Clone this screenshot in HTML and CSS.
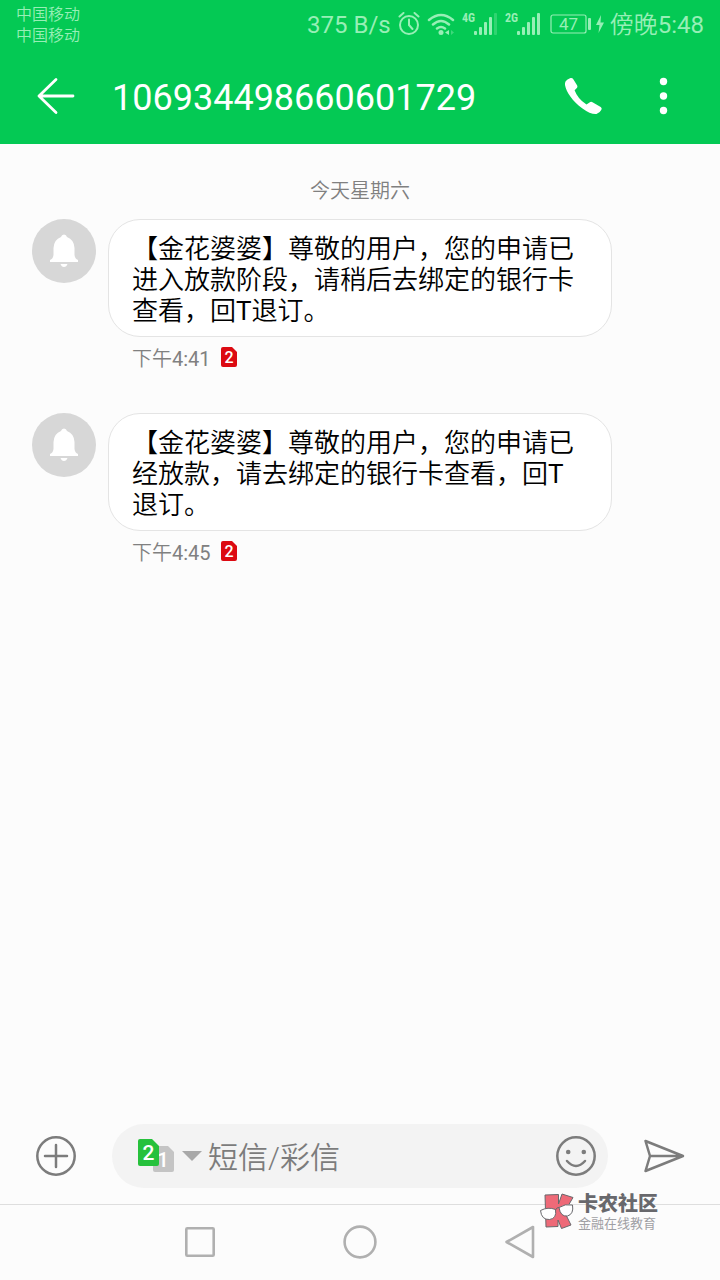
FILE: index.html
```html
<!DOCTYPE html>
<html lang="zh-CN">
<head>
<meta charset="utf-8">
<meta name="viewport" content="width=device-width, initial-scale=1">
<title>106934498660601729</title>
<link rel="stylesheet" href="styles.css">
</head>
<body>
<div class="screen">
  <header class="top">
    <div class="status">
      <div class="carriers"><span>中国移动</span><span>中国移动</span></div>
      <div class="indicators">
        <span class="speed">375 B/s</span>
        <svg width="22" height="26" viewBox="0 0 22 26" fill="none" stroke="currentColor" stroke-width="2" stroke-linecap="round"><circle cx="11" cy="13" r="9"/><path d="M11 7.500V13l3.500 4M1.500 4.500l4-3.500M20.500 4.500l-4-3.500"/></svg>
        <svg class="wifi" width="28" height="26" viewBox="0 0 28 26" fill="none" stroke="currentColor" stroke-width="2.500" stroke-linecap="round"><path d="M2 8Q14-2 26 8M6 12.500Q14 5.500 22 12.500M10 16.500Q14 13.500 18 16.500"/><circle cx="14" cy="20.500" r="2.500" fill="currentColor" stroke="none"/><path d="M22 18v5l-4-2.500z" fill="currentColor" stroke="none"/><path d="M24 18v5l3-2.500z" fill="currentColor" stroke="none" opacity=".4"/></svg>
        <svg class="signal" width="36" height="26" viewBox="0 0 36 26" fill="currentColor"><text x="0" y="10" class="net">4G</text><rect x="12" y="19" width="3" height="4" rx="1"/><rect x="17" y="15" width="3" height="8" rx="1"/><rect x="22" y="10" width="3" height="13" rx="1"/><rect x="27" y="5" width="3" height="18" rx="1"/><rect x="32" y="1" width="3" height="22" rx="1" opacity=".3"/></svg>
        <svg class="signal" width="36" height="26" viewBox="0 0 36 26" fill="currentColor"><text x="0" y="10" class="net">2G</text><rect x="12" y="19" width="3" height="4" rx="1"/><rect x="17" y="15" width="3" height="8" rx="1"/><rect x="22" y="10" width="3" height="13" rx="1"/><rect x="27" y="5" width="3" height="18" rx="1"/><rect x="32" y="1" width="3" height="22" rx="1"/></svg>
        <svg class="battery" width="42" height="26" viewBox="0 0 42 26" fill="currentColor"><rect x="1" y="3" width="35" height="18" rx="2" fill="none" stroke="currentColor" stroke-width="1.200"/><rect x="38" y="6" width="3" height="12" rx="1"/><text x="18.500" y="18" text-anchor="middle" class="level">47</text></svg>
        <svg class="bolt" width="10" height="26" viewBox="0 0 10 26" fill="currentColor"><path d="M6 3L1 13h3.500L3.500 21 9 10.500H5.500z"/></svg>
        <span class="clock">傍晚<span class="latin">5:48</span></span>
      </div>
    </div>
    <div class="titlebar">
      <button class="icon-btn" aria-label="返回"><svg width="40" height="40" viewBox="0 0 40 40" fill="none" stroke="currentColor" stroke-width="2.800" stroke-linecap="round" stroke-linejoin="round"><path d="M37 20H3M20 3.500L3 20l17 16.500"/></svg></button>
      <h1 class="title">106934498660601729</h1>
      <button class="icon-btn" aria-label="呼叫"><svg width="40" height="40" viewBox="0 0 40 40" fill="currentColor"><path d="M1.500 5.500Q3 3 6.500 2Q8.300 1.500 9.300 3.200L13.200 9.500Q14 11 12.600 12.200L10.600 14.200Q13.500 22.500 22.500 28.600L25.500 26.500Q27 25.400 28.500 26.200L36.700 31Q38.300 32.200 37.400 33.800Q35.900 37 32.500 38Q26.500 38.500 18.500 32.500C8.500 25.500 2 15.500 1 9Q.700 7 1.500 5.500Z"/></svg></button>
      <button class="icon-btn" aria-label="更多"><svg width="40" height="40" viewBox="0 0 40 40" fill="currentColor"><circle cx="19.500" cy="5.500" r="3.700"/><circle cx="19.500" cy="20" r="3.700"/><circle cx="19.500" cy="34.500" r="3.700"/></svg></button>
    </div>
  </header>

  <main class="thread">
    <p class="day">今天星期六</p>
    <article class="message">
      <svg class="avatar" width="64" height="64" viewBox="0 0 64 64"><circle cx="32" cy="32" r="32" fill="#d7d7d7"/><path fill="#fff" d="M32 15.500q2.300 0 3 2.500Q42 20.500 42.500 29v7q.500 4 3.500 5v2H18v-2q3-1 3.500-5v-7q.500-8.500 7.500-11 .700-2.500 3-2.500zM28.500 45h7q-1 3-3.500 3t-3.500-3z"/></svg>
      <div class="body">
        <p class="bubble">【金花婆婆】尊敬的用户，您的申请已进入放款阶段，请稍后去绑定的银行卡查看，回<span class="latin">T</span>退订。</p>
        <div class="meta"><time>下午<span class="latin">4:41</span></time><svg width="18" height="22" viewBox="0 0 18 22"><path fill="#dc0a12" d="M3 1h9l5 5v13q0 2-2 2H3q-2 0-2-2V3q0-2 2-2z"/><text x="9" y="17" text-anchor="middle" class="sim-no">2</text></svg></div>
      </div>
    </article>
    <article class="message">
      <svg class="avatar" width="64" height="64" viewBox="0 0 64 64"><circle cx="32" cy="32" r="32" fill="#d7d7d7"/><path fill="#fff" d="M32 15.500q2.300 0 3 2.500Q42 20.500 42.500 29v7q.500 4 3.500 5v2H18v-2q3-1 3.500-5v-7q.500-8.500 7.500-11 .700-2.500 3-2.500zM28.500 45h7q-1 3-3.500 3t-3.500-3z"/></svg>
      <div class="body">
        <p class="bubble">【金花婆婆】尊敬的用户，您的申请已经放款，请去绑定的银行卡查看，回<span class="latin">T</span>退订。</p>
        <div class="meta"><time>下午<span class="latin">4:45</span></time><svg width="18" height="22" viewBox="0 0 18 22"><path fill="#dc0a12" d="M3 1h9l5 5v13q0 2-2 2H3q-2 0-2-2V3q0-2 2-2z"/><text x="9" y="17" text-anchor="middle" class="sim-no">2</text></svg></div>
      </div>
    </article>
  </main>

  <form class="composer">
    <button type="button" class="tool" aria-label="添加"><svg width="44" height="44" viewBox="0 0 44 44" fill="none" stroke="currentColor" stroke-width="2.500" stroke-linecap="round"><circle cx="22" cy="22" r="18.700"/><path d="M22 11v22M11 22h22"/></svg></button>
    <div class="field">
      <button type="button" class="sim" aria-label="选择 SIM 卡"><svg width="64" height="36" viewBox="0 0 64 36"><path fill="#c4c4c4" d="M18 8h13l6 6v18q0 2-2 2H18q-2 0-2-2V10q0-2 2-2z"/><text x="26" y="29" text-anchor="middle" class="sim-pick">1</text><path fill="#26c13c" d="M3 1h12l7 7v18q0 2-2 2H3q-2 0-2-2V3q0-2 2-2z"/><text x="11.500" y="22" text-anchor="middle" class="sim-pick">2</text><path fill="#a8a8a8" d="M45 13h20l-10 10z"/></svg></button>
      <input class="input" type="text" aria-label="短信/彩信" placeholder="短信/彩信">
      <button type="button" class="tool" aria-label="表情"><svg width="44" height="44" viewBox="0 0 44 44" fill="none" stroke="currentColor" stroke-width="2.500" stroke-linecap="round"><circle cx="22" cy="22" r="18.700"/><g fill="currentColor" stroke="none"><circle cx="14.200" cy="18" r="2.300"/><circle cx="29.800" cy="18" r="2.300"/></g><path d="M13 27q9 10 18 0"/></svg></button>
    </div>
    <button type="submit" class="tool" aria-label="发送"><svg width="44" height="44" viewBox="0 0 44 44" fill="none" stroke="currentColor" stroke-width="2.500" stroke-linejoin="round"><path d="M3.500 7L41 22 3.500 37 8 22zM8 22h33"/></svg></button>
  </form>

  <nav class="navbar">
    <button class="nav-btn" aria-label="最近任务"><svg width="36" height="36" viewBox="0 0 36 36" fill="none" stroke="currentColor" stroke-width="2.600"><rect x="4.300" y="4.300" width="27.400" height="27.400" rx="1"/></svg></button>
    <button class="nav-btn" aria-label="主屏幕"><svg width="36" height="36" viewBox="0 0 36 36" fill="none" stroke="currentColor" stroke-width="2.600"><circle cx="18" cy="18" r="15.400"/></svg></button>
    <button class="nav-btn" aria-label="返回"><svg width="36" height="36" viewBox="0 0 36 36" fill="none" stroke="currentColor" stroke-width="2.600" stroke-linejoin="round"><path d="M31 3v30L4.500 18z"/></svg></button>
  </nav>

  <aside class="brand">
    <svg width="36" height="38" viewBox="0 0 36 38" stroke="#68686c" stroke-width="1" stroke-linejoin="round"><path fill="#ee6a78" d="M5 3l13.500-.500V12L22 2l11 3.500L24.500 20 31 33l-9.500 3.500L18 28v6.500L6 35z"/><path fill="#fff" d="M.500 18.500Q8 14.500 15.500 17.500q1.500 9-6 10Q1.500 28 .500 18.500zM19 15.500q6-4 13.500-2.500 1.500 9-5 11-7 1-8.500-8.500z"/><path fill="none" d="M15.500 18q1.500-3 3.500-2.500"/></svg>
    <div class="brand-text"><strong>卡农社区</strong><small>金融在线教育</small></div>
  </aside>
</div>
</body>
</html>
```
FILE: styles.css
```css
* { box-sizing: border-box; }
body {
  margin: 0;
  background: #fcfcfc;
  color: #000;
  font-family: Roboto, "Noto Sans CJK SC", sans-serif;
}
h1, p { margin: 0; }
button {
  padding: 0;
  border: 0;
  background: none;
  color: inherit;
}
svg { display: block; flex: none; }
.latin { font-weight: 400; }

.screen {
  position: relative;
  display: flex;
  flex-direction: column;
  min-height: 100vh;
}

.top { background: #04c954; color: #fff; }
.status {
  display: flex;
  justify-content: space-between;
  align-items: center;
  height: 48px;
  padding: 2px 16px 0;
  color: #97efb6;
}
.carriers {
  display: flex;
  flex-direction: column;
  font-size: 16px;
  font-weight: 350;
  line-height: 21px;
}
.indicators {
  display: flex;
  align-items: center;
  gap: 7px;
  font-size: 24px;
  line-height: 32px;
}
.clock { font-weight: 350; }
.battery { margin-left: 2px; }
.bolt { margin: 0 -2px 0 -4px; }
.net { font: 700 12px "Roboto Condensed", Roboto, sans-serif; }
.level { font: 400 17px Roboto, sans-serif; }

.titlebar {
  display: flex;
  align-items: center;
  height: 96px;
  padding: 0 36px;
  gap: 36px;
}
.title {
  flex: 1;
  padding-top: 4px;
  font-size: 36px;
  font-weight: 400;
  line-height: 48px;
}
.icon-btn:last-child { margin-left: 4px; }

.thread {
  flex: 1;
  padding: 32px 32px 0;
}
.day {
  margin-bottom: 13px;
  color: #808080;
  font-size: 20px;
  font-weight: 350;
  line-height: 30px;
  text-align: center;
}
.message {
  display: flex;
  gap: 12px;
  margin-bottom: 40px;
}
.body { flex: 0 1 504px; }
.bubble {
  padding: 14px 23px 9px;
  border: 1px solid #e4e4e4;
  border-radius: 32px;
  background: #fff;
  font-size: 26px;
  font-weight: 350;
  line-height: 31px;
}
.meta {
  display: flex;
  align-items: center;
  gap: 9px;
  height: 36px;
  padding: 4px 24px 0;
  color: #808080;
  font-size: 20px;
  font-weight: 350;
}
.sim-no { fill: #fff; font: 500 16px Roboto, sans-serif; }

.composer {
  display: flex;
  align-items: center;
  gap: 34px;
  padding: 0 34px 16px;
  color: #7c7c7c;
}
.field {
  display: flex;
  flex: 1;
  align-items: center;
  gap: 7px;
  min-width: 0;
  height: 64px;
  padding: 0 10px 0 25px;
  border-radius: 32px;
  background: #f3f3f3;
}
.sim svg { overflow: visible; }
.sim-pick { fill: #fff; font: 500 21px Roboto, sans-serif; }
.input {
  flex: 1;
  min-width: 0;
  height: 48px;
  padding: 3px 0 0;
  border: 0;
  outline: 0;
  background: none;
  font-family: inherit;
  font-size: 30px;
  font-weight: 350;
}
.input::placeholder { color: #7c7c7c; opacity: 1; }

.navbar {
  display: grid;
  grid-template-columns: repeat(3, 160px);
  justify-content: center;
  align-items: center;
  height: 76px;
  padding-bottom: 2px;
  border-top: 1px solid #dedede;
  color: #b0b0b0;
}
.nav-btn { display: grid; place-items: center; }

.brand {
  position: absolute;
  right: 62px;
  bottom: 50px;
  display: flex;
  gap: 2px;
  color: #68686c;
}
.brand-text { display: flex; flex-direction: column; }
.brand strong {
  font-size: 20px;
  font-weight: 900;
  line-height: 25px;
}
.brand small {
  color: #a0a0a4;
  font-size: 13px;
  line-height: 13px;
}
```
